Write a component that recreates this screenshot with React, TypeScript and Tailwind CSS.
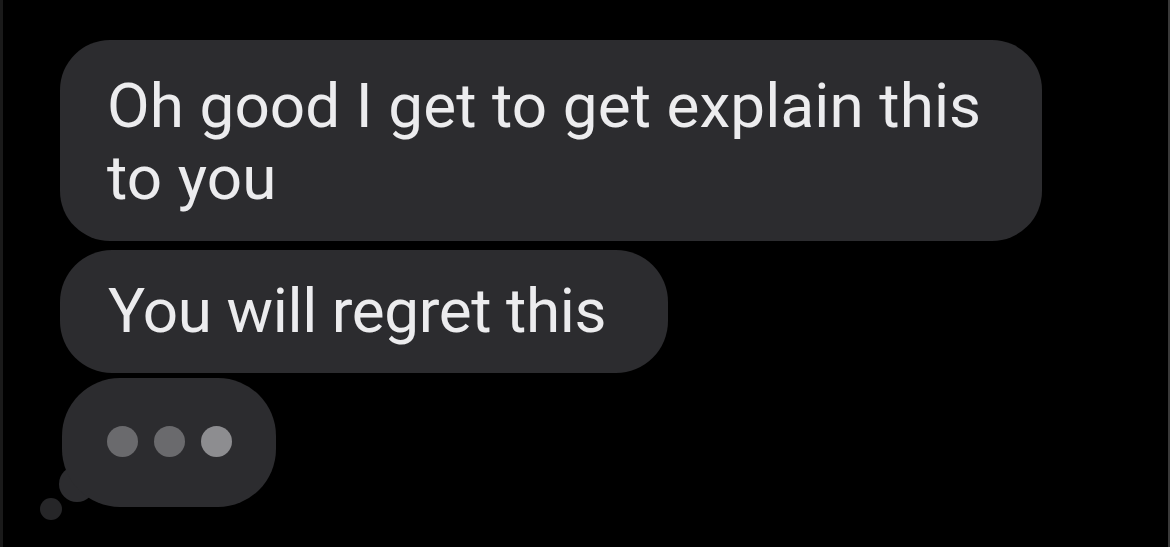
import React from "react";

export default function App() {
  return (
    <div
      className="w-[1170px] h-[547px] bg-black overflow-hidden border-l-[3px] border-r-[2px] border-l-[#1a1a1a] border-r-[#3a3a3a]"
      style={{ fontFamily: "Roboto, 'Noto Sans', sans-serif" }}
    >
      <div className="flex flex-col items-start pl-[57px] pt-[40px]">
        <div className="w-[982px] h-[201px] rounded-[50px] bg-[#2c2c2f] pl-[47px] pt-[30px] text-[62px] leading-[72px] tracking-[0.1px] text-[#ececee]">
          Oh good I get to get explain this
          <br />
          to you
        </div>
        <div className="mt-[9px] w-[608px] h-[123px] rounded-[52px] bg-[#2c2c2f] pl-[48px] pt-[25px] text-[62px] leading-[72px] tracking-[-0.4px] text-[#ececee]">
          You will regret this
        </div>
        <div className="relative mt-[5px] ml-[2px] w-[214px] h-[129px]">
          <div className="absolute left-[-3px] top-[88px] w-[36px] h-[36px] rounded-full bg-[#2c2c2f]" />
          <div className="absolute left-[-22px] top-[120px] w-[22px] h-[22px] rounded-full bg-[#262628]" />
          <div className="relative w-[214px] h-[129px] rounded-[58px] bg-[#2c2c2f] flex items-center justify-center gap-[16px] pb-[2px]">
            <div className="w-[31px] h-[31px] rounded-full bg-[#6a6a6d]" />
            <div className="w-[31px] h-[31px] rounded-full bg-[#6a6a6d]" />
            <div className="w-[31px] h-[31px] rounded-full bg-[#8d8d90]" />
          </div>
        </div>
      </div>
    </div>
  );
}
